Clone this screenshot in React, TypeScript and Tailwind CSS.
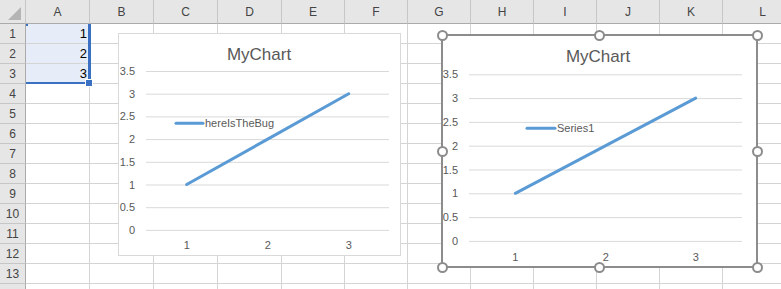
import React from 'react';

const COLS = ['A', 'B', 'C', 'D', 'E', 'F', 'G', 'H', 'I', 'J', 'K', 'L'];
const ROWS = Array.from({ length: 14 }, (_, i) => i + 1);
const VALUES: Record<number, number> = { 1: 1, 2: 2, 3: 3 };
const TICKS = ['3.5', '3', '2.5', '2', '1.5', '1', '0.5', '0'];

interface ChartGeom {
  width: number;
  height: number;
  titleX: number;
  titleY: number;
  gridTop: number;
  gridStep: number;
  gridLeft: number;
  gridRight: number;
  labelRight: number;
  xs: number[];
  xLabelY: number;
  legendX: [number, number];
  legendY: number;
  series: string;
}

function Chart({ g }: { g: ChartGeom }) {
  const yFor = (v: number) => g.gridTop + (3.5 - v) * 2 * g.gridStep;
  return (
    <svg
      width={g.width}
      height={g.height}
      className="absolute left-0 top-0 font-['Liberation_Sans',Arial,sans-serif]"
    >
      <text x={g.titleX} y={g.titleY} textAnchor="middle" fontSize="17" fill="#595959">
        MyChart
      </text>
      {TICKS.map((t, i) => {
        const y = g.gridTop + i * g.gridStep;
        return (
          <g key={t}>
            <line x1={g.gridLeft} x2={g.gridRight} y1={y + 0.5} y2={y + 0.5} stroke="#d9d9d9" strokeWidth="1" />
            <text x={g.labelRight} y={y + 4} textAnchor="end" fontSize="11" fill="#595959">
              {t}
            </text>
          </g>
        );
      })}
      {g.xs.map((x, i) => (
        <text key={i} x={x} y={g.xLabelY} textAnchor="middle" fontSize="11" fill="#595959">
          {i + 1}
        </text>
      ))}
      <polyline
        points={g.xs.map((x, i) => `${x},${yFor(i + 1)}`).join(' ')}
        fill="none"
        stroke="#5b9bd5"
        strokeWidth="3"
        strokeLinecap="round"
      />
      <line x1={g.legendX[0]} x2={g.legendX[1]} y1={g.legendY} y2={g.legendY} stroke="#5b9bd5" strokeWidth="3" strokeLinecap="round" />
      <text x={g.legendX[1] + 2} y={g.legendY + 4} fontSize="11" fill="#595959">
        {g.series}
      </text>
    </svg>
  );
}

const chartA: ChartGeom = {
  width: 283,
  height: 223,
  titleX: 141,
  titleY: 27,
  gridTop: 38,
  gridStep: 22.7,
  gridLeft: 28,
  gridRight: 271,
  labelRight: 17,
  xs: [68.7, 149.7, 230.7],
  xLabelY: 216,
  legendX: [58, 85],
  legendY: 90.3,
  series: 'hereIsTheBug',
};

const chartB: ChartGeom = {
  width: 317,
  height: 234,
  titleX: 157,
  titleY: 28,
  gridTop: 40.3,
  gridStep: 23.8,
  gridLeft: 28,
  gridRight: 301,
  labelRight: 17,
  xs: [74.3, 164.7, 254.7],
  xLabelY: 227,
  legendX: [86, 114],
  legendY: 94.3,
  series: 'Series1',
};

function Handle() {
  return <div className="w-[11px] h-[11px] rounded-full bg-white border-2 border-[#8c8c8c]" />;
}

export default function App() {
  return (
    <div className="relative w-[781px] h-[289px] overflow-hidden bg-white font-['Liberation_Sans',Arial,sans-serif]">
      <div className="grid grid-cols-[26px_64px_64px_64px_64px_63px_63px_63px_63px_63px_63px_63px_80px] grid-rows-[24px_repeat(14,20px)]">
        <div className="flex items-end justify-end pr-[3px] pb-[2px] bg-[#e6e6e6] border-r border-b border-r-[#c6c6c6] border-b-[#ababab]">
          <svg width="14" height="14">
            <polygon points="13,0 13,13 0,13" fill="#b4b4b4" />
          </svg>
        </div>
        {COLS.map((c) => (
          <div
            key={c}
            className="flex items-center justify-center bg-[#e6e6e6] border-r border-b border-r-[#c6c6c6] border-b-[#ababab] text-[12px] text-[#444] pt-[1px]"
          >
            {c}
          </div>
        ))}
        {ROWS.map((r) => (
          <React.Fragment key={r}>
            <div className="flex items-center justify-center bg-[#e6e6e6] border-r border-b border-r-[#ababab] border-b-[#c6c6c6] text-[12px] text-[#444]">
              {r <= 13 ? r : null}
            </div>
            {COLS.map((c) => {
              const selected = c === 'A' && r <= 3;
              return (
                <div
                  key={c}
                  className={`flex items-center justify-end pr-[2px] border-r border-b border-[#d4d4d4] text-[13px] text-black ${
                    selected ? 'bg-[#e7edf8]' : 'bg-white'
                  }`}
                >
                  {selected ? VALUES[r] : null}
                </div>
              );
            })}
          </React.Fragment>
        ))}
      </div>

      {/* selection outline A1:A3 */}
      <div className="absolute left-[26px] top-[24px] w-[65px] h-[60px] border-r-[3px] border-b-2 border-[#3a70c2]" />
      <div className="absolute left-[26px] top-[24px] w-[2px] h-[2px] bg-[#3a70c2]" />
      <div className="absolute left-[85px] top-[79px] w-[8px] h-[8px] bg-[#3a70c2] border border-white" />

      {/* chart 1 */}
      <div className="absolute left-[118px] top-[33px] w-[283px] h-[223px] bg-white">
        <Chart g={chartA} />
        <div className="absolute inset-0 border border-[#d9d9d9]" />
      </div>

      {/* chart 2 (selected, with sizing handles) */}
      <div className="absolute left-[441px] top-[34px] w-[317px] h-[234px] bg-white">
        <Chart g={chartB} />
        <div className="absolute inset-0 border-2 border-[#8c8c8c]" />
        <div className="absolute -inset-[4.5px] flex flex-col justify-between">
          <div className="flex justify-between">
            <Handle />
            <Handle />
            <Handle />
          </div>
          <div className="flex justify-between">
            <Handle />
            <Handle />
          </div>
          <div className="flex justify-between">
            <Handle />
            <Handle />
            <Handle />
          </div>
        </div>
      </div>
    </div>
  );
}
